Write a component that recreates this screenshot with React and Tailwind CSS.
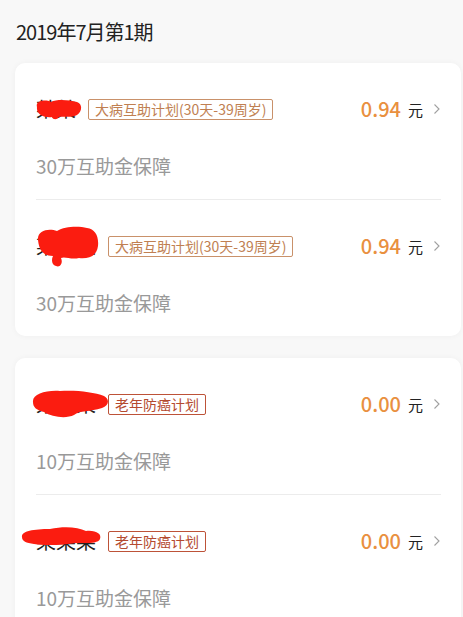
const blobs = {
  a: { box: "-left-[3px] top-[1px] w-[49px] h-[21px]", vb: "0 0 49 21", d: "M4 8 C2 2 12 0 18 3 C24 0 36 1 44 3 C50 5 49 13 44 16 C38 19 30 17 26 18 C24 21 20 21 19 18 C12 19 3 16 4 8 Z" },
  b: { box: "-left-[1px] -top-[9px] w-[65px] h-[42px]", vb: "0 0 65 42", d: "M3 14 C2 4 14 2 22 5 C30 0 44 0 52 2 C60 3 64 10 63 20 C62 30 54 33 44 32 C36 34 30 30 26 32 C28 36 26 42 21 40 C17 39 16 34 18 30 C8 30 4 24 3 14 Z" },
  c: { box: "-left-[6px] -top-[5px] w-[80px] h-[30px]", vb: "0 0 80 30", d: "M3 14 C2 6 16 2 30 3 C46 2 64 4 74 8 C80 11 79 18 72 20 C60 24 50 22 44 27 C36 31 22 29 14 24 C6 22 3 19 3 14 Z" },
  d: { box: "-left-[16px] -top-[4px] w-[83px] h-[20px]", vb: "0 0 83 20", d: "M2 11 C1 5 14 3 30 3 C44 0 58 1 66 5 C76 4 82 8 80 13 C78 18 66 17 56 17 C44 19 26 20 14 18 C6 17 2 15 2 11 Z" },
};

const groups = [
  [
    { name: "某某", blob: "a", tag: "大病互助计划(30天-39周岁)", tone: "brown", price: "0.94", desc: "30万互助金保障" },
    { name: "某某某", blob: "b", tag: "大病互助计划(30天-39周岁)", tone: "brown", price: "0.94", desc: "30万互助金保障" },
  ],
  [
    { name: "某某某", blob: "c", tag: "老年防癌计划", tone: "red", price: "0.00", desc: "10万互助金保障" },
    { name: "某某某", blob: "d", tag: "老年防癌计划", tone: "red", price: "0.00", desc: "10万互助金保障" },
  ],
];

function Item({ item, last }) {
  const blob = blobs[item.blob];
  const tagClass =
    item.tone === "red"
      ? "border-[#bd5238] text-[#b44a30]"
      : "border-[#c9916a] text-[#c07f52]";
  return (
    <div className={last ? "" : "border-b border-[#ececec]"}>
      <div className="pt-[35px] pb-[21px]">
        <div className="flex items-center h-[22px]">
          <span className="relative mr-[12px] text-[20px] leading-[22px] text-[#222]">
            {item.name}
            <svg className={`absolute ${blob.box}`} viewBox={blob.vb}>
              <path d={blob.d} fill="#fb1c10" />
            </svg>
          </span>
          <span className={`relative border rounded-[2px] px-[6px] h-[21px] flex items-center text-[14px] leading-none ${tagClass}`}>
            {item.tag}
          </span>
          <div className="ml-auto flex items-center">
            <span className="text-[20px] leading-none font-medium text-[#e9903f]">{item.price}</span>
            <span className="ml-[7px] text-[15px] leading-none text-[#222]">元</span>
            <svg className="ml-[10px] w-[8px] h-[12px]" viewBox="0 0 8 12">
              <path d="M1.5 1.5 L6 6 L1.5 10.5" fill="none" stroke="#a0a0a0" strokeWidth="1.1" />
            </svg>
          </div>
        </div>
        <div className="mt-[34px] h-[24px] leading-[24px] text-[19px] text-[#999]">{item.desc}</div>
      </div>
    </div>
  );
}

export default function App() {
  return (
    <div
      className="min-h-[617px] bg-[#f8f8f8] pt-[20px]"
      style={{ fontFamily: '"Noto Sans CJK SC", "Noto Sans", sans-serif' }}
    >
      <h1 className="pl-[16px] text-[20px] leading-[24px] tracking-[-1px] text-[#222] font-normal">2019年7月第1期</h1>
      <div className="mt-[19px] flex flex-col gap-[22px] ml-[15px] mr-[2px]">
        {groups.map((items, gi) => (
          <div key={gi} className="bg-white rounded-[10px] shadow-[0_0_6px_rgba(0,0,0,0.04)] pl-[21px] pr-[20px]">
            {items.map((item, i) => (
              <Item key={i} item={item} last={i === items.length - 1} />
            ))}
          </div>
        ))}
      </div>
    </div>
  );
}
